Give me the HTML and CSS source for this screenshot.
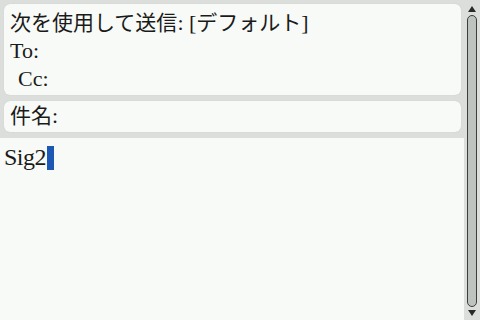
FILE: index.html
```html
<!DOCTYPE html>
<html lang="ja">
<head>
    <meta charset="UTF-8">
    <title>新規メッセージ</title>
    <link rel="stylesheet" href="styles.css">
</head>
<body>
    <div class="screen">
        <div class="compose">
            <div class="card header-card">
                <div class="row"><span class="ja">次を使用して送信</span>: [<span class="ja">デフォルト</span>]</div>
                <div class="row">To:</div>
                <div class="row indent">Cc:</div>
            </div>
            <div class="card subject-card">
                <div class="row"><span class="ja">件名</span>:</div>
            </div>
            <div class="body-area">
                <div class="body-text">Sig2<span class="cursor"></span></div>
            </div>
        </div>

        <div class="scrollbar">
            <div class="arrow up"></div>
            <div class="thumb"></div>
            <div class="arrow down"></div>
        </div>
    </div>
</body>
</html>
```

FILE: styles.css
```css
/* Global Styling */
body {
    margin: 0;
    padding: 0;
    width: 480px;
    height: 320px;
    overflow: hidden;
    background-color: #dcdedc;
    color: #1a1a1a;
    font-family: "Liberation Serif", "Noto Sans CJK JP", serif;
    font-size: 22px;
}

.ja {
    font-size: 21px;
}

.screen {
    display: flex;
    flex-direction: row;
    height: 320px;
}

.compose {
    width: 464px;
    display: flex;
    flex-direction: column;
}

.card {
    background-color: #f7faf6;
    border-radius: 6px;
    margin: 0 3px 0 4px;
    box-shadow: 0 0 1px rgba(0, 0, 0, 0.15);
}

.header-card {
    margin-top: 4px;
    height: 91px;
    padding-top: 5px;
    box-sizing: border-box;
}

.subject-card {
    margin-top: 6px;
    height: 31px;
    padding-top: 1px;
    box-sizing: border-box;
}

.row {
    height: 28px;
    line-height: 28px;
    padding-left: 6px;
}

.indent {
    padding-left: 14px;
}

.body-area {
    flex: 1;
    margin-top: 6px;
    background-color: #f7faf6;
}

.body-text {
    padding: 6px 0 0 4px;
    font-size: 24px;
    letter-spacing: -0.5px;
    line-height: 26px;
}

.cursor {
    display: inline-block;
    width: 7px;
    height: 24px;
    margin-left: 1px;
    vertical-align: -5px;
    background-color: #1b57b3;
}

/* Scrollbar */
.scrollbar {
    width: 16px;
    display: flex;
    flex-direction: column;
    align-items: center;
    padding: 6px 0 4px;
    box-sizing: border-box;
}

.arrow {
    width: 0;
    height: 0;
    border-left: 4px solid transparent;
    border-right: 4px solid transparent;
}

.arrow.up {
    border-bottom: 6px solid #2a2a2a;
}

.arrow.down {
    border-top: 6px solid #2a2a2a;
}

.thumb {
    flex: 1;
    width: 8px;
    margin: 3px 0;
    background-color: #bfc3bf;
    border: 1px solid #3a3f3a;
    border-radius: 5px;
}
```
